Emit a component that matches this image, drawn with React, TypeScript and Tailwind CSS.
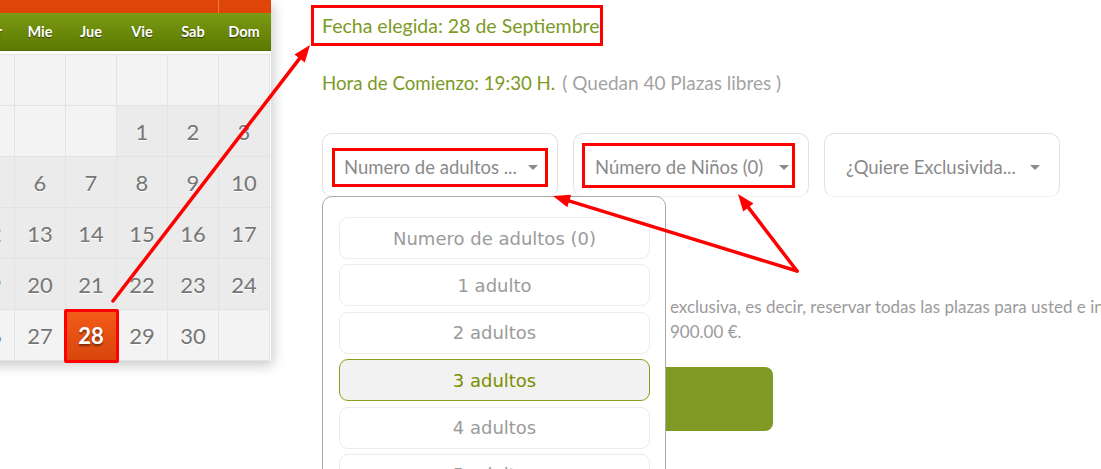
import React from "react";

const SANS = "font-['Lato',sans-serif]";

type Cell = { d?: number; tone: "light" | "dark" | "sel" };

function buildCells(): Cell[] {
  const cells: Cell[] = [];
  for (let i = 0; i < 7; i++) cells.push({ tone: "light" });
  for (let i = 0; i < 4; i++) cells.push({ tone: "light" });
  for (let d = 1; d <= 30; d++) {
    if (d === 28) cells.push({ d, tone: "sel" });
    else if (d >= 25) cells.push({ d, tone: "light" });
    else cells.push({ d, tone: "dark" });
  }
  cells.push({ tone: "light" });
  return cells;
}

function Arrow({ x1, y1, x2, y2 }: { x1: number; y1: number; x2: number; y2: number }) {
  const dx = x2 - x1;
  const dy = y2 - y1;
  const len = Math.sqrt(dx * dx + dy * dy);
  const ux = dx / len;
  const uy = dy / len;
  const L = 17;
  const W = 13;
  const bx = x2 - ux * L;
  const by = y2 - uy * L;
  const nx = -uy;
  const ny = ux;
  const pts = `${x2},${y2} ${bx + (nx * W) / 2},${by + (ny * W) / 2} ${bx - (nx * W) / 2},${by - (ny * W) / 2}`;
  return (
    <g>
      <line x1={x1} y1={y1} x2={bx + ux * 2} y2={by + uy * 2} stroke="#ff0000" strokeWidth={3.5} strokeLinecap="round" />
      <polygon points={pts} fill="#ff0000" />
    </g>
  );
}

function Caret() {
  return <span className="block w-0 h-0 border-l-[5px] border-r-[5px] border-t-[5px] border-l-transparent border-r-transparent border-t-[#8a8a8a]" />;
}

function SelectBox({ label, children }: { label: string; children?: React.ReactNode }) {
  return (
    <div className="relative w-[236px] h-[64px] shrink-0 rounded-[10px] border border-[#e2e2e2] border-b-[#f2f2f2] bg-white">
      <div className="absolute left-[21px] top-[20px] text-[18.5px] leading-[26px] text-[#8a8a8a] whitespace-nowrap">{label}</div>
      <div className="absolute left-[205px] top-[31px]">
        <Caret />
      </div>
      {children}
    </div>
  );
}

const options = ["Numero de adultos (0)", "1 adulto", "2 adultos", "3 adultos", "4 adultos", "5 adultos"];

export default function App() {
  const cells = buildCells();
  const days = ["Lun", "Mar", "Mie", "Jue", "Vie", "Sab", "Dom"];
  return (
    <div className={`relative w-[1101px] h-[469px] overflow-hidden bg-white flex ${SANS}`}>
      {/* Calendar */}
      <div className="ml-[-88px] w-[359px] shrink-0 self-start bg-white shadow-[2px_4px_12px_rgba(0,0,0,0.22)]">
        <div className="h-[13px] flex bg-[#df4509]">
          <div className="flex-1" />
          <div className="w-[53px] border-l border-[#ee7a48]" />
        </div>
        <div className="h-[38px] grid grid-cols-[repeat(7,50px)] gap-px px-px bg-gradient-to-b from-[#7a9a12] to-[#5d7a02] border-b border-[#4f6a00]">
          {days.map((d) => (
            <div key={d} className="flex items-center justify-center text-white text-[14.5px] font-bold [text-shadow:0_1px_1px_rgba(0,0,0,0.55)]">
              {d}
            </div>
          ))}
        </div>
        <div className="h-[3px]" />
        <div className="w-[358px] grid grid-cols-[repeat(7,50px)] auto-rows-[50px] gap-px p-px bg-[#e3e3e3]">
          {cells.map((c, i) => (
            <div
              key={i}
              className={
                c.tone === "sel"
                  ? "relative flex items-center justify-center bg-gradient-to-b from-[#f45c18] to-[#d8460c]"
                  : c.tone === "dark"
                  ? "flex items-center justify-center bg-[#ebebeb]"
                  : "flex items-center justify-center bg-[#f3f3f3]"
              }
            >
              {c.d !== undefined && (
                <span
                  className={
                    c.tone === "sel"
                      ? "text-[22px] font-bold text-white [text-shadow:0_2px_2px_rgba(0,0,0,0.45)]"
                      : "text-[22px] text-[#767676] [text-shadow:0_1px_0_#ffffff]"
                  }
                >
                  {c.d}
                </span>
              )}
              {c.tone === "sel" && <div className="absolute left-[-2px] top-[-1px] w-[55px] h-[54px] border-[3px] border-[#ff0000] rounded-[2px]" />}
            </div>
          ))}
        </div>
      </div>

      {/* Right column */}
      <div className="ml-[40px] pt-[5px] flex flex-col flex-1">
        <div className="self-start h-[41px] w-[292px] border-[3px] border-[#ff0000] pl-[8px] flex items-center text-[19.5px] text-[#7b9a24] whitespace-nowrap">
          Fecha elegida: 28 de Septiembre
        </div>
        <div className="mt-[22px] ml-[11px] h-[30px] flex items-center whitespace-nowrap">
          <span className="text-[18.7px] text-[#7b9a24]">Hora de Comienzo: 19:30 H.</span>
          <span className="ml-[7px] text-[19px] text-[#a3a3a3]">( Quedan 40 Plazas libres )</span>
        </div>
        <div className="mt-[35px] ml-[11px] flex gap-[15px]">
          <div className="relative">
            <SelectBox label="Numero de adultos ...">
              <div className="absolute left-[9px] top-[14px] w-[216px] h-[39px] border-[3px] border-[#ff0000]" />
            </SelectBox>
            {/* Dropdown list */}
            <div className="absolute z-10 left-0 top-[63px] w-[344px] h-[320px] bg-white border border-[#a9a9a9] rounded-t-[10px] pt-[20px] pl-[16px] pr-[15px] flex flex-col gap-[5.4px] font-['DejaVu_Sans',sans-serif]">
              {options.map((o) => (
                <div
                  key={o}
                  className={
                    o === "3 adultos"
                      ? "h-[42px] shrink-0 rounded-[9px] border border-[#8d9c1e] bg-[#f2f2f2] flex items-center justify-center text-[18px] text-[#7b8f00]"
                      : "h-[42px] shrink-0 rounded-[9px] border border-[#ececec] bg-white flex items-center justify-center text-[18px] text-[#9b9b9b]"
                  }
                >
                  {o}
                </div>
              ))}
            </div>
          </div>
          <SelectBox label="Número de Niños (0)">
            <div className="absolute left-[8px] top-[9px] w-[213px] h-[45px] border-[3px] border-[#ff0000]" />
          </SelectBox>
          <SelectBox label="¿Quiere Exclusivida..." />
        </div>
        <div className="mt-[97px] ml-[11px] pl-[348px] text-[17px] leading-[25px] text-[#9b9b9b] whitespace-nowrap">
          <div>exclusiva, es decir, reservar todas las plazas para usted e incluso sus acompañantes</div>
          <div>900.00 €.</div>
        </div>
        <div className="mt-[23px] ml-[11px] w-[451px] h-[64px] rounded-[8px] bg-[#7f9a25]" />
      </div>

      {/* Annotation arrows */}
      <svg className="absolute inset-0 z-20 pointer-events-none" width={1101} height={469} viewBox="0 0 1101 469">
        <Arrow x1={113} y1={301} x2={310} y2={45} />
        <Arrow x1={797} y1={271} x2={553} y2={196} />
        <Arrow x1={797} y1={271} x2={738} y2={194} />
      </svg>
    </div>
  );
}
